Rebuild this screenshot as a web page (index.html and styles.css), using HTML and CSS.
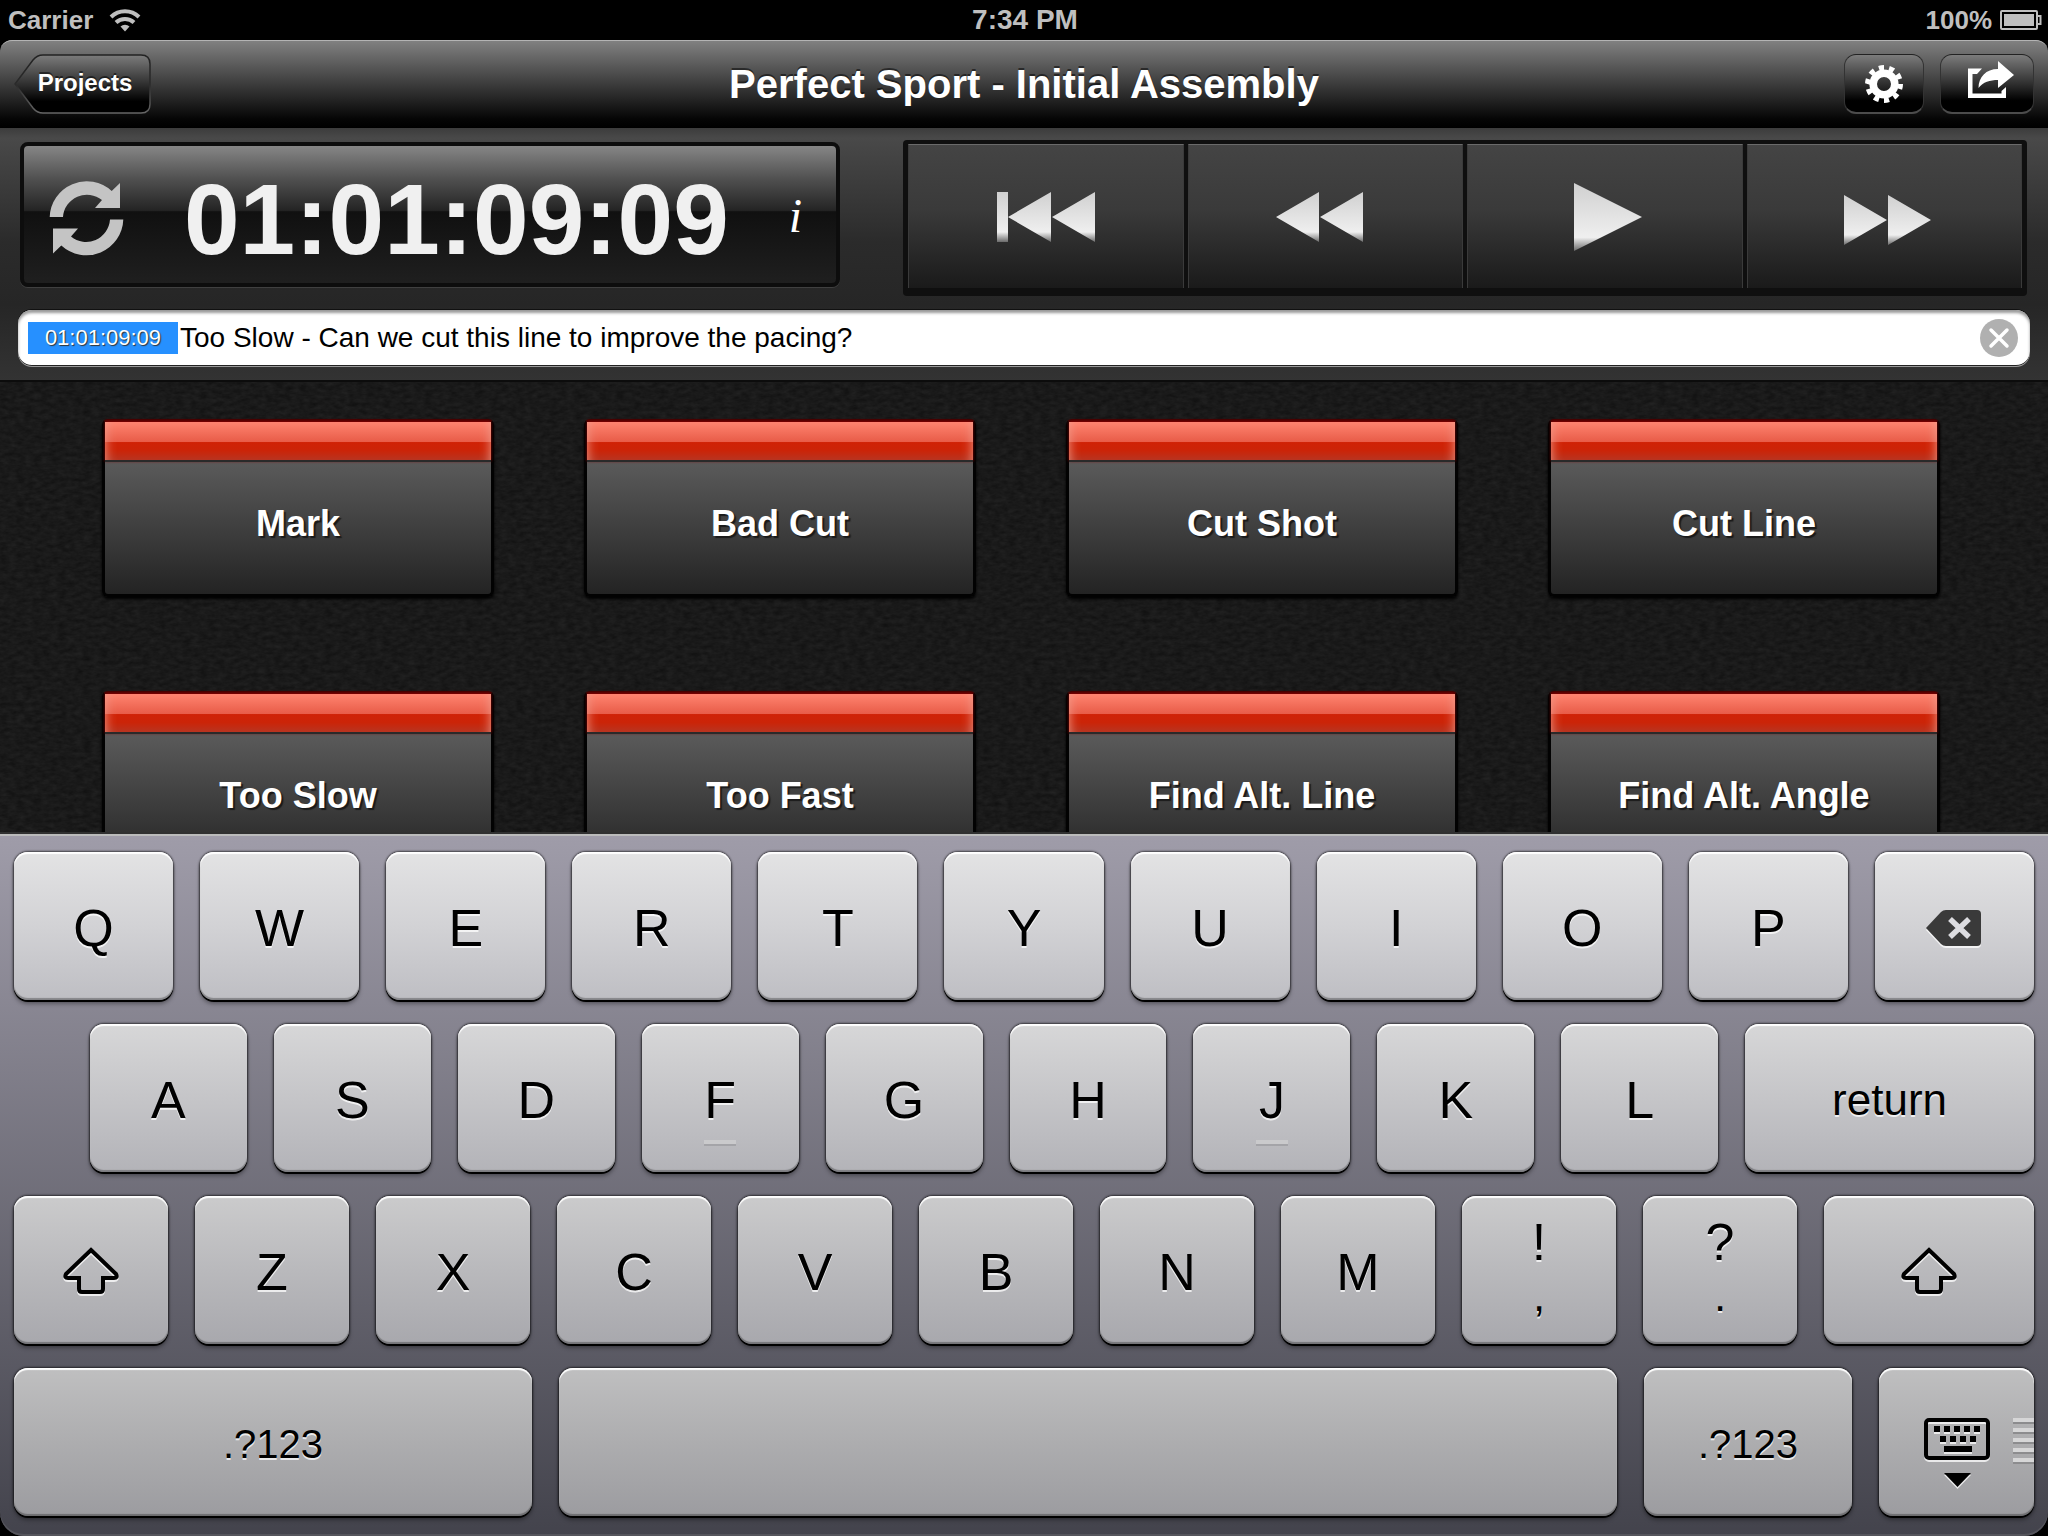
FILE: index.html
```html
<!DOCTYPE html>
<html lang="en">
<head>
<meta charset="utf-8">
<title>Perfect Sport - Initial Assembly</title>
<link rel="stylesheet" href="styles.css">
</head>
<body>
<div class="app">
  <div class="status">
    <div class="status-side">
      <span>Carrier</span>
      <svg width="32" height="24" viewBox="0 0 32 24" aria-hidden="true">
        <g fill="none" stroke="#bfbfbf" stroke-width="4">
          <path d="M2 9 A20 20 0 0 1 30 9"/>
          <path d="M7 14.500 A13 13 0 0 1 25 14.500"/>
        </g>
        <path d="M16 23.500 L11.500 18.500 A6.500 6.500 0 0 1 20.500 18.500 Z" fill="#bfbfbf"/>
      </svg>
    </div>
    <span class="status-time">7:34 PM</span>
    <div class="status-side status-side--end">
      <span>100%</span>
      <svg width="42" height="22" viewBox="0 0 42 22" aria-hidden="true">
        <rect x="1" y="2" width="36" height="18" rx="1" fill="none" stroke="#bfbfbf" stroke-width="2"/>
        <rect x="4" y="5" width="30" height="12" fill="#bfbfbf"/>
        <path d="M38 7 H40.500 V15 H38" fill="none" stroke="#bfbfbf" stroke-width="2"/>
      </svg>
    </div>
  </div>

  <header class="navbar">
    <div class="nav-side">
      <button type="button" class="back">
        <svg class="back-shape" width="138" height="61" viewBox="0 0 138 61" aria-hidden="true">
          <defs>
            <linearGradient id="backFill" x1="0" y1="0" x2="0" y2="1">
              <stop offset="0" stop-color="#7c7c7c"/><stop offset=".5" stop-color="#303030"/><stop offset=".8" stop-color="#000"/>
            </linearGradient>
            <linearGradient id="backEdge" x1="0" y1="0" x2="0" y2="1">
              <stop offset="0" stop-color="#222"/><stop offset=".5" stop-color="#2a2a2a"/><stop offset="1" stop-color="#666"/>
            </linearGradient>
          </defs>
          <path d="M1 30 L19 6 Q23 1 29 1 H127 Q136 1 136 10 V50 Q136 59 127 59 H29 Q23 59 19 54 Z" fill="url(#backFill)" stroke="url(#backEdge)" stroke-width="1.500"/>
        </svg>
        <span class="back-label">Projects</span>
      </button>
    </div>
    <h1 class="title">Perfect Sport - Initial Assembly</h1>
    <div class="nav-side nav-side--end">
      <button type="button" class="nav-button" aria-label="Settings">
        <svg width="40" height="40" viewBox="-20 -20 40 40">
          <g fill="none" stroke="#fff">
            <circle r="10.800" stroke-width="7.600"/>
            <circle r="16.500" stroke-width="5" pathLength="20" stroke-dasharray="1 1"/>
          </g>
        </svg>
      </button>
      <button type="button" class="nav-button nav-button--wide" aria-label="Share">
        <svg width="54" height="48" viewBox="0 0 54 48">
          <path fill="#fff" d="M8 8.500 H22 L17 14 H12.500 V33.500 H41.500 V31 L46 27 V38 H8 Z"/>
          <path fill="#fff" d="M38 1 L54 15 L38 28 V20 C30 20 23 22 18.500 28 C18.500 17 26 9 38 9 Z"/>
        </svg>
      </button>
    </div>
  </header>

  <section class="panel">
    <div class="panel-row">
      <div class="timecode">
        <button type="button" class="plain" aria-label="Sync">
          <svg width="75" height="75" viewBox="0 0 75 75" fill="#c4c4c4">
            <path d="M0.700 36 A37 37 0 0 1 62.700 10 L71 2 V27 H46 L53 19 A24 24 0 0 0 14 36 Z"/>
            <path transform="rotate(180 37.500 37.300)" d="M0.700 36 A37 37 0 0 1 62.700 10 L71 2 V27 H46 L53 19 A24 24 0 0 0 14 36 Z"/>
          </svg>
        </button>
        <output class="timecode-value">01:01:09:09</output>
        <button type="button" class="plain info" aria-label="Info">i</button>
      </div>
      <div class="transport">
        <svg class="defs" width="0" height="0" aria-hidden="true">
          <defs>
            <linearGradient id="glyph" x1="0" y1="0" x2="0" y2="1">
              <stop offset="0" stop-color="#d0d0d0"/><stop offset=".8" stop-color="#efefef"/><stop offset="1" stop-color="#6a6a6a"/>
            </linearGradient>
          </defs>
        </svg>
        <button type="button" class="transport-button" aria-label="Go to start">
          <svg width="98" height="50" viewBox="0 0 98 50"><path fill="url(#glyph)" d="M0 0 H11 V50 H0 Z M54 0 V50 L11 25 Z M98 0 V50 L55 25 Z"/></svg>
        </button>
        <button type="button" class="transport-button" aria-label="Rewind">
          <svg width="98" height="50" viewBox="0 0 98 50"><path fill="url(#glyph)" d="M43 0 V50 L0 25 Z M87 0 V50 L44 25 Z"/></svg>
        </button>
        <button type="button" class="transport-button" aria-label="Play">
          <svg width="74" height="68" viewBox="0 0 74 68"><path fill="url(#glyph)" d="M6 0 L74 34 L6 68 Z"/></svg>
        </button>
        <button type="button" class="transport-button" aria-label="Fast forward">
          <svg width="96" height="56" viewBox="0 0 96 56"><path fill="url(#glyph)" d="M8 6 L51 31 L8 56 Z M52 6 L95 31 L52 56 Z"/></svg>
        </button>
      </div>
    </div>
    <div class="note">
      <label class="note-tag" for="note">01:01:09:09</label>
      <input class="note-input" id="note" type="text" value="Too Slow - Can we cut this line to improve the pacing?">
      <button type="button" class="plain" aria-label="Clear text">
        <svg width="38" height="38" viewBox="0 0 38 38">
          <circle cx="19" cy="19" r="19" fill="#b0b0b0"/>
          <path d="M11 11 L27 27 M27 11 L11 27" stroke="#fff" stroke-width="3.500" stroke-linecap="round"/>
        </svg>
      </button>
    </div>
  </section>

  <main class="cues">
    <svg class="grain" width="100%" height="100%" aria-hidden="true">
      <filter id="leather" x="0" y="0" width="100%" height="100%" color-interpolation-filters="sRGB">
        <feTurbulence type="fractalNoise" baseFrequency=".12 .24" numOctaves="3" seed="4"/>
        <feColorMatrix values=".08 0 0 0 .06  .08 0 0 0 .06  .08 0 0 0 .06  0 0 0 0 1"/>
      </filter>
      <rect width="100%" height="100%" filter="url(#leather)"/>
    </svg>
    <div class="cue-grid">
      <button type="button" class="cue"><span class="cue-bar"></span><span class="cue-label">Mark</span></button>
      <button type="button" class="cue"><span class="cue-bar"></span><span class="cue-label">Bad Cut</span></button>
      <button type="button" class="cue"><span class="cue-bar"></span><span class="cue-label">Cut Shot</span></button>
      <button type="button" class="cue"><span class="cue-bar"></span><span class="cue-label">Cut Line</span></button>
      <button type="button" class="cue"><span class="cue-bar"></span><span class="cue-label">Too Slow</span></button>
      <button type="button" class="cue"><span class="cue-bar"></span><span class="cue-label">Too Fast</span></button>
      <button type="button" class="cue"><span class="cue-bar"></span><span class="cue-label">Find Alt. Line</span></button>
      <button type="button" class="cue"><span class="cue-bar"></span><span class="cue-label">Find Alt. Angle</span></button>
    </div>
  </main>

  <div class="keyboard">
    <div class="keys keys--top">
      <button type="button" class="key">Q</button>
      <button type="button" class="key">W</button>
      <button type="button" class="key">E</button>
      <button type="button" class="key">R</button>
      <button type="button" class="key">T</button>
      <button type="button" class="key">Y</button>
      <button type="button" class="key">U</button>
      <button type="button" class="key">I</button>
      <button type="button" class="key">O</button>
      <button type="button" class="key">P</button>
      <button type="button" class="key" aria-label="Delete">
        <svg class="key-icon" width="56" height="36" viewBox="0 0 56 36">
          <path fill="#3a3a3a" d="M0 18 L15 2 Q17 0 20 0 H51 Q55 0 55 4 V32 Q55 36 51 36 H20 Q17 36 15 34 Z"/>
          <path d="M24 9 L43 27 M43 9 L24 27" stroke="#dcdce0" stroke-width="5.500"/>
        </svg>
      </button>
    </div>
    <div class="keys keys--home">
      <button type="button" class="key">A</button>
      <button type="button" class="key">S</button>
      <button type="button" class="key">D</button>
      <button type="button" class="key key--nub">F</button>
      <button type="button" class="key">G</button>
      <button type="button" class="key">H</button>
      <button type="button" class="key key--nub">J</button>
      <button type="button" class="key">K</button>
      <button type="button" class="key">L</button>
      <button type="button" class="key key--return">return</button>
    </div>
    <div class="keys keys--lower">
      <button type="button" class="key" aria-label="Shift">
        <svg class="key-icon" width="58" height="52" viewBox="0 0 58 52">
          <path d="M29 4 L54 28 Q56 32 52 32 H41 V43 Q41 46 38 46 H20 Q17 46 17 43 V32 H6 Q2 32 4 28 Z" fill="none" stroke="#000" stroke-width="4"/>
        </svg>
      </button>
      <button type="button" class="key">Z</button>
      <button type="button" class="key">X</button>
      <button type="button" class="key">C</button>
      <button type="button" class="key">V</button>
      <button type="button" class="key">B</button>
      <button type="button" class="key">N</button>
      <button type="button" class="key">M</button>
      <button type="button" class="key key--pair"><span>!</span><span class="key-second">,</span></button>
      <button type="button" class="key key--pair"><span>?</span><span class="key-second">.</span></button>
      <button type="button" class="key" aria-label="Shift">
        <svg class="key-icon" width="58" height="52" viewBox="0 0 58 52">
          <path d="M29 4 L54 28 Q56 32 52 32 H41 V43 Q41 46 38 46 H20 Q17 46 17 43 V32 H6 Q2 32 4 28 Z" fill="none" stroke="#000" stroke-width="4"/>
        </svg>
      </button>
    </div>
    <div class="keys keys--bottom">
      <button type="button" class="key key--mode">.?123</button>
      <button type="button" class="key" aria-label="Space"></button>
      <button type="button" class="key key--mode">.?123</button>
      <button type="button" class="key key--dismiss" aria-label="Hide keyboard">
        <svg class="key-icon" width="66" height="88" viewBox="0 -18 66 88">
          <rect x="2" y="2" width="62" height="38" rx="3" fill="none" stroke="#000" stroke-width="4"/>
          <path d="M10 8h6v6h-6z M20 8h6v6h-6z M30 8h6v6h-6z M40 8h6v6h-6z M50 8h6v6h-6z M16 18h6v6h-6z M26 18h6v6h-6z M36 18h6v6h-6z M46 18h6v6h-6z M20 28h28v6h-28z M20 55h27l-13.500 14z"/>
        </svg>
      </button>
    </div>
  </div>
</div>
</body>
</html>
```
FILE: styles.css
```css
* {
  box-sizing: border-box;
}

body {
  margin: 0;
  background: #000;
  color: #fff;
  font-family: "Liberation Sans", Arial, sans-serif;
}

button {
  margin: 0;
  padding: 0;
  border: 0;
  background: none;
  color: inherit;
  font: inherit;
}

svg {
  display: block;
  flex: none;
}

.app {
  display: flex;
  flex-direction: column;
  height: 100vh;
}

/* Status bar */

.status {
  display: grid;
  grid-template-columns: 1fr auto 1fr;
  align-items: center;
  height: 40px;
  padding: 0 6px 0 8px;
  color: #bfbfbf;
  font-size: 26px;
  font-weight: bold;
}

.status-side {
  display: flex;
  align-items: center;
  gap: 16px;
}

.status-side--end {
  justify-content: flex-end;
  gap: 8px;
}

.status-time {
  font-size: 28px;
}

/* Navigation bar */

.navbar {
  display: grid;
  grid-template-columns: 1fr auto 1fr;
  align-items: center;
  height: 88px;
  padding: 0 14px;
  border-radius: 12px 12px 0 0;
  background: linear-gradient(#828282, #585858 30%, #2e2e2e 60%, #050505 90%, #000);
  box-shadow: inset 0 2px 0 -1px #b4b4b4;
}

.title {
  margin: 0;
  font-size: 40px;
  line-height: 48px;
  text-shadow: 0 -2px 0 rgba(0, 0, 0, .5);
}

.nav-side {
  display: flex;
  gap: 16px;
}

.nav-side--end {
  justify-content: flex-end;
}

.back {
  display: grid;
  align-items: center;
}

.back-shape,
.back-label {
  grid-area: 1 / 1;
}

.back-label {
  padding: 0 18px 2px 22px;
  font-size: 24px;
  font-weight: bold;
  text-shadow: 0 -2px 0 rgba(0, 0, 0, .5);
}

.nav-button {
  display: flex;
  align-items: center;
  justify-content: center;
  width: 80px;
  height: 60px;
  border: 1px solid #333;
  border-top-color: #222;
  border-bottom: 2px solid #4c4c4c;
  border-radius: 12px;
  background: linear-gradient(#7c7c7c, #303030 50%, #000 80%);
}

.nav-button--wide {
  width: 94px;
}

/* Timecode, transport and note */

.panel {
  display: flex;
  flex-direction: column;
  gap: 14px;
  padding: 12px 18px 14px;
  border-bottom: 2px solid #0c0c0c;
  background: linear-gradient(#3c3c3c, #494949 4%, #2b2b2b 45%, #262626 70%, #333);
}

.panel-row {
  display: grid;
  grid-template-columns: 818fr 1126fr;
  align-items: start;
  gap: 63px;
  padding: 0 3px 0 2px;
}

.plain {
  display: block;
  flex: none;
}

.timecode {
  display: flex;
  align-items: center;
  gap: 60px;
  height: 145px;
  margin-top: 2px;
  padding: 8px 34px 0 25px;
  border: 4px solid #0d0d0d;
  border-radius: 8px;
  background: linear-gradient(#868686, #505050 24%, #242424 47%, #101010 48%, #1f1f1f);
  box-shadow: 0 1px 0 #404040;
}

.timecode-value {
  flex: 1;
  min-width: 0;
  color: #f0f0f0;
  font-size: 100px;
  font-weight: bold;
  line-height: 100px;
  white-space: nowrap;
}

.info {
  padding-bottom: 6px;
  color: #fff;
  font: italic 48px/48px "Liberation Serif", "Times New Roman", serif;
}

.transport {
  display: flex;
  gap: 4px;
  height: 156px;
  padding: 4px 5px 8px;
  border-radius: 4px;
  background: #0f0f0f;
}

.defs {
  position: absolute;
}

.transport-button {
  display: flex;
  flex: 1;
  align-items: center;
  justify-content: center;
  border: 1px solid #3a3a3a;
  border-top-color: #6a6a6a;
  border-bottom: 0;
  background: linear-gradient(#444, #3a3a3a 45%, #1a1a1a);
}

.note {
  display: flex;
  align-items: center;
  height: 56px;
  padding: 0 12px 0 10px;
  border-radius: 14px;
  background: #fff;
  box-shadow: inset 0 3px 3px #999, inset 0 -1px 0 #222, 0 -1px 0 #111, 0 1px 0 #999;
}

.note-tag {
  width: 150px;
  background: #2690ff;
  font-size: 22px;
  line-height: 32px;
  text-align: center;
  text-shadow: 1px 1px 1px #333;
}

.note-input {
  flex: 1;
  min-width: 0;
  padding: 0 0 0 2px;
  border: 0;
  outline: 0;
  background: none;
  color: #000;
  font: 28px/32px "Liberation Sans", Arial, sans-serif;
}

/* Cue buttons */

.cues {
  position: relative;
  flex: 1 1 0;
  min-height: 0;
  overflow: hidden;
  border-bottom: 2px solid #303030;
  background: #1a1a1a;
}

.grain {
  position: absolute;
  inset: 0;
}

.cue-grid {
  position: relative;
  display: grid;
  grid-template-columns: repeat(4, 1fr);
  gap: 94px 90px;
  padding: 37px 108px 39px 102px;
}

.cue {
  display: flex;
  flex-direction: column;
  height: 178px;
  border: 3px solid #020202;
  border-top-color: #3a0000;
  border-radius: 6px;
  background: linear-gradient(#5c5c5c, #5a5a5a 24%, #232323);
  box-shadow: 0 2px 3px #000;
}

.cue-bar {
  height: 40px;
  border-bottom: 2px solid #2a2a2a;
  background: linear-gradient(#ff8470, #e85c48 52%, #d02206 54%, #cb2408 75%, #b83420);
  box-shadow: 0 -1px 3px 0 #900000, inset 12px 0 12px -12px #f0a090, inset -12px 0 12px -12px #f0a090;
}

.cue-label {
  display: flex;
  flex: 1;
  align-items: center;
  justify-content: center;
  padding-bottom: 8px;
  font-size: 36px;
  font-weight: bold;
  text-shadow: 2px 2px 1px #1a1a1a;
}

/* Keyboard */

.keyboard {
  display: flex;
  flex-direction: column;
  gap: 24px;
  padding: 16px 14px 20px;
  border-top: 2px solid #bbb;
  border-radius: 0 0 24px 24px;
  background: linear-gradient(#9f9ca9, #43434c);
  box-shadow: inset 0 -2px 0 #55555c;
}

.keys {
  display: grid;
  gap: 27px;
}

.keys--top {
  --hi: #e3e3e4;
  --mid: #d2d2d5;
  --lo: #bebec3;
  grid-template-columns: repeat(11, 1fr);
}

.keys--home {
  --hi: #d7d7d8;
  --mid: #c5c5c8;
  --lo: #b3b3b8;
  grid-template-columns: repeat(9, 157fr) 289fr;
  padding-left: 76px;
}

.keys--lower {
  --hi: #cbcbcc;
  --mid: #b9b9bc;
  --lo: #a8a8ad;
  grid-template-columns: repeat(10, 154fr) 210fr;
}

.keys--bottom {
  --hi: #bfbfc0;
  --mid: #adadaf;
  --lo: #9c9ca0;
  grid-template-columns: 518fr 1058fr 208fr 155fr;
}

.key {
  position: relative;
  display: flex;
  align-items: center;
  justify-content: center;
  min-width: 0;
  height: 148px;
  padding-top: 4px;
  border-radius: 14px;
  background: linear-gradient(var(--hi), var(--mid) 50%, var(--lo));
  box-shadow: inset 0 2px 1px #fff, inset 0 -2px 1px rgba(0, 0, 0, .3), 0 2px 0 #000, 0 0 2px 1px rgba(0, 0, 0, .6), 0 4px 4px rgba(0, 0, 0, .35);
  color: #000;
  font-size: 52px;
  line-height: 50px;
  text-shadow: 0 2px 0 rgba(255, 255, 255, .75);
}

.key-icon {
  filter: drop-shadow(0 2px 0 rgba(255, 255, 255, .75));
}

.key--return {
  font-size: 44px;
}

.key--mode {
  font-size: 40px;
}

.key--pair {
  flex-direction: column;
  padding: 0 0 6px;
  line-height: 58px;
}

.key-second {
  font-size: 44px;
  line-height: 50px;
}

.key--nub::after {
  content: "";
  position: absolute;
  bottom: 26px;
  left: 50%;
  width: 32px;
  height: 6px;
  margin-left: -16px;
  background: linear-gradient(#cacacc 4px, #a4a4a8 4px);
}

.key--dismiss::after {
  content: "";
  position: absolute;
  top: 50px;
  right: 0;
  width: 21px;
  height: 46px;
  background: repeating-linear-gradient(#d6d6d7 0 4px, #8c8c8e 4px 6px, transparent 6px 10px);
}
```
